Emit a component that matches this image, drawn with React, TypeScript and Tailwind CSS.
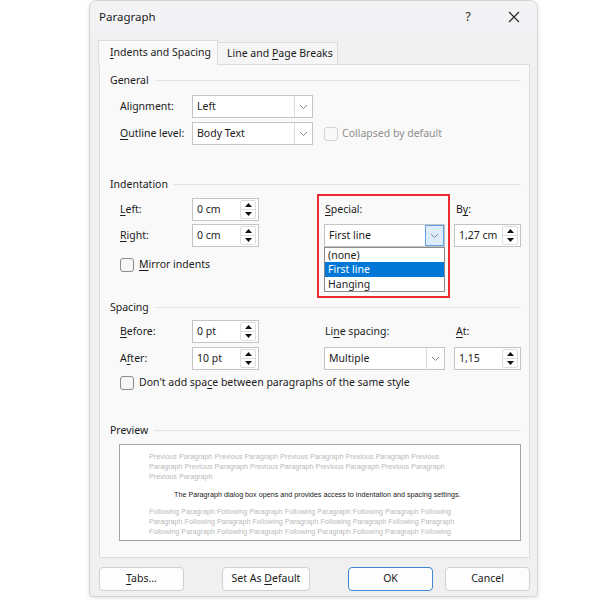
import React from "react";

const U = ({ children }: { children: React.ReactNode }) => (
  <span className="underline decoration-1 underline-offset-[2px]">{children}</span>
);

const Chevron = () => (
  <svg width="9" height="6" viewBox="0 0 9 6" fill="none">
    <path d="M1 1l3.5 3.5L8 1" stroke="#8a8a8a" strokeWidth="1" />
  </svg>
);

const Select = ({ value, active = false }: { value: string; active?: boolean }) => (
  <div className="w-[121px] h-[23px] border border-[#c4c4c4] bg-white flex items-center">
    <span className="flex-1 pl-[4px] text-[10.5px] text-[#1b1b1b] leading-none whitespace-nowrap">{value}</span>
    <div
      className={
        active
          ? "w-[19px] h-[21px] bg-[#dcecfc] border border-[#5ea1e6] flex items-center justify-center"
          : "w-[18px] h-[21px] border-l border-[#dcdcdc] flex items-center justify-center"
      }
    >
      <Chevron />
    </div>
  </div>
);

const Spinner = ({ value }: { value: string }) => (
  <div className="w-[67px] h-[23px] border border-[#c4c4c4] bg-white flex items-center">
    <span className="flex-1 pl-[4px] text-[10.5px] text-[#1b1b1b] leading-none whitespace-nowrap">{value}</span>
    <div className="w-[16px] h-[19px] mr-[2px] border border-[#dedede] rounded-[2px] flex flex-col">
      <div className="flex-1 flex items-center justify-center border-b border-[#dedede]">
        <svg width="7" height="4" viewBox="0 0 7 4">
          <path d="M0 4L3.5 0L7 4z" fill="#111" />
        </svg>
      </div>
      <div className="flex-1 flex items-center justify-center">
        <svg width="7" height="4" viewBox="0 0 7 4">
          <path d="M0 0L3.5 4L7 0z" fill="#111" />
        </svg>
      </div>
    </div>
  </div>
);

const Check = ({ disabled = false }: { disabled?: boolean }) => (
  <div
    className={
      disabled
        ? "w-[14px] h-[14px] rounded-[3px] border border-[#d2d2d2] bg-[#f9f9f9]"
        : "w-[14px] h-[14px] rounded-[3px] border border-[#8c8c8c] bg-[#f7f7f7]"
    }
  />
);

const GroupHeader = ({ title }: { title: string }) => (
  <div className="h-[14px] flex items-center pl-[10px] pr-[8px]">
    <span className="text-[10.5px] text-[#1b1b1b] leading-none whitespace-nowrap">{title}</span>
    <div className="flex-1 h-px bg-[#e2e2e2] ml-[6px]" />
  </div>
);

const Label = ({ children, className = "" }: { children: React.ReactNode; className?: string }) => (
  <div className={"flex items-center text-[10.5px] text-[#1b1b1b] leading-none whitespace-nowrap " + className}>
    {children}
  </div>
);

const Btn = ({ children, w, primary = false }: { children: React.ReactNode; w: string; primary?: boolean }) => (
  <div
    className={
      (primary ? "border-[#3f86d6] " : "border-[#d0d0d0] ") +
      w +
      " h-[24px] border rounded-[4px] bg-[#fdfdfd] flex items-center justify-center text-[10.5px] text-[#1b1b1b] whitespace-nowrap"
    }
  >
    {children}
  </div>
);

export default function App() {
  const font = { fontFamily: '"Noto Sans", "Open Sans", sans-serif' };
  const prevFont = { fontFamily: '"Liberation Sans", Arial, sans-serif' };
  return (
    <div className="w-[600px] h-[600px] bg-white overflow-hidden" style={font}>
      <div className="ml-[89px] w-[449px] h-[597px] border border-[#d4d4d4] rounded-t-[8px] rounded-b-[4px] bg-[#f0f0f0] shadow-[0_1px_4px_rgba(0,0,0,0.12)] overflow-hidden">
        {/* Title bar */}
        <div className="h-[31px] bg-[#f3f3f6] flex items-center pl-[9px]">
          <span className="text-[11.5px] text-[#1b1b1b]">Paragraph</span>
          <span className="ml-auto text-[13px] text-[#333] mr-[37px]">?</span>
          <svg width="12" height="12" viewBox="0 0 12 12" className="mr-[17px]">
            <path d="M1 1L11 11M11 1L1 11" stroke="#222" strokeWidth="1.1" />
          </svg>
        </div>

        <div className="pt-[8px]">
          {/* Tabs */}
          <div className="flex items-end pl-[8px] h-[24px]">
            <div className="w-[120px] h-[25px] mb-[-1px] relative z-10 bg-[#f9f9f9] border border-b-0 border-[#dcdcdc] flex items-center pl-[11px] text-[10.5px] text-[#1b1b1b] whitespace-nowrap">
              <span>
                <U>I</U>ndents and Spacing
              </span>
            </div>
            <div className="w-[120px] h-[22px] bg-[#f5f5f5] border border-l-0 border-b-0 border-[#dcdcdc] flex items-center pl-[9px] text-[10.5px] text-[#1b1b1b] whitespace-nowrap">
              <span>
                Line and <U>P</U>age Breaks
              </span>
            </div>
          </div>

          {/* Panel */}
          <div className="ml-[9px] w-[431px] h-[494px] border border-[#dcdcdc] bg-[#f9f9f9] pt-[8px]">
            <GroupHeader title="General" />
            <div className="mt-[8px] pl-[20px] flex items-center h-[23px]">
              <Label className="w-[72px]">Alignment:</Label>
              <Select value="Left" />
            </div>
            <div className="mt-[4px] pl-[20px] flex items-center h-[23px]">
              <Label className="w-[72px]">
                <span>
                  <U>O</U>utline level:
                </span>
              </Label>
              <Select value="Body Text" />
              <div className="ml-[11px]">
                <Check disabled />
              </div>
              <span className="ml-[4px] text-[10.5px] text-[#8f8f8f] whitespace-nowrap">Collapsed by default</span>
            </div>

            <div className="mt-[32px]">
              <GroupHeader title="Indentation" />
            </div>
            <div className="mt-[7px] ml-[20px] relative grid grid-cols-[72px_67px_65px_121px_9px_67px] grid-rows-[23px_23px] gap-y-[3px]">
              <Label>
                <span>
                  <U>L</U>eft:
                </span>
              </Label>
              <Spinner value="0 cm" />
              <div />
              <Label className="pl-[1px]">
                <span>
                  <U>S</U>pecial:
                </span>
              </Label>
              <div />
              <Label className="pl-[2px]">
                <span>
                  B<U>y</U>:
                </span>
              </Label>
              <Label>
                <span>
                  <U>R</U>ight:
                </span>
              </Label>
              <Spinner value="0 cm" />
              <div />
              <Select value="First line" active />
              <div />
              <Spinner value="1,27 cm" />

              {/* dropdown list */}
              <div className="absolute left-[204px] top-[49px] w-[121px] h-[45px] bg-white border border-[#8a8a8a] flex flex-col text-[10.5px] leading-none text-[#1b1b1b] whitespace-nowrap">
                <div className="h-[14px] flex items-center pl-[3px]">(none)</div>
                <div className="h-[15px] flex items-center pl-[3px] bg-[#0078d7] text-white">First line</div>
                <div className="h-[14px] flex items-center pl-[3px]">Hanging</div>
              </div>
              {/* red highlight */}
              <div className="absolute left-[197px] top-[-4px] w-[133px] h-[104px] border-2 border-[#ec2a30] pointer-events-none" />
            </div>
            <div className="mt-[11px] pl-[20px] flex items-center h-[14px]">
              <Check />
              <span className="ml-[5px] text-[10.5px] text-[#1b1b1b] whitespace-nowrap">
                <U>M</U>irror indents
              </span>
            </div>

            <div className="mt-[28px]">
              <GroupHeader title="Spacing" />
            </div>
            <div className="mt-[6px] ml-[20px] grid grid-cols-[72px_67px_65px_121px_9px_67px] grid-rows-[23px_23px] gap-y-[4px]">
              <Label>
                <span>
                  <U>B</U>efore:
                </span>
              </Label>
              <Spinner value="0 pt" />
              <div />
              <Label className="pl-[1px]">
                <span>
                  Li<U>n</U>e spacing:
                </span>
              </Label>
              <div />
              <Label className="pl-[2px]">
                <span>
                  <U>A</U>t:
                </span>
              </Label>
              <Label>
                <span>
                  A<U>f</U>ter:
                </span>
              </Label>
              <Spinner value="10 pt" />
              <div />
              <Select value="Multiple" />
              <div />
              <Spinner value="1,15" />
            </div>
            <div className="mt-[6px] pl-[20px] flex items-center h-[14px]">
              <Check />
              <span className="ml-[5px] text-[10.5px] text-[#1b1b1b] whitespace-nowrap">
                Don't add spa<U>c</U>e between paragraphs of the same style
              </span>
            </div>

            <div className="mt-[33px]">
              <GroupHeader title="Preview" />
            </div>
            <div
              className="mt-[7px] ml-[19px] w-[402px] h-[97px] bg-white border border-[#a4a4a4] pt-[7px] pl-[29px] text-[7.2px] leading-[10px] whitespace-nowrap overflow-hidden"
              style={prevFont}
            >
              <div className="text-[#b9b9b9]">
                <div className="h-[10px]">Previous Paragraph Previous Paragraph Previous Paragraph Previous Paragraph Previous</div>
                <div className="h-[10px]">Paragraph Previous Paragraph Previous Paragraph Previous Paragraph Previous Paragraph</div>
                <div className="h-[10px]">Previous Paragraph</div>
              </div>
              <div className="mt-[8px] ml-[25px] h-[10px] text-[#222]">
                The Paragraph dialog box opens and provides access to indentation and spacing settings.
              </div>
              <div className="mt-[7px] text-[#b9b9b9]">
                <div className="h-[10px]">Following Paragraph Following Paragraph Following Paragraph Following Paragraph Following</div>
                <div className="h-[10px]">Paragraph Following Paragraph Following Paragraph Following Paragraph Following Paragraph</div>
                <div className="h-[11px]">Following Paragraph Following Paragraph Following Paragraph Following Paragraph Following</div>
              </div>
            </div>
          </div>

          {/* Buttons */}
          <div className="mt-[9px] flex pl-[9px]">
            <Btn w="w-[85px]">
              <span>
                <U>T</U>abs...
              </span>
            </Btn>
            <div className="ml-[38px]">
              <Btn w="w-[88px]">
                <span>
                  Set As <U>D</U>efault
                </span>
              </Btn>
            </div>
            <div className="ml-[38px]">
              <Btn w="w-[85px]" primary>
                OK
              </Btn>
            </div>
            <div className="ml-[12px]">
              <Btn w="w-[85px]">Cancel</Btn>
            </div>
          </div>
        </div>
      </div>
    </div>
  );
}
